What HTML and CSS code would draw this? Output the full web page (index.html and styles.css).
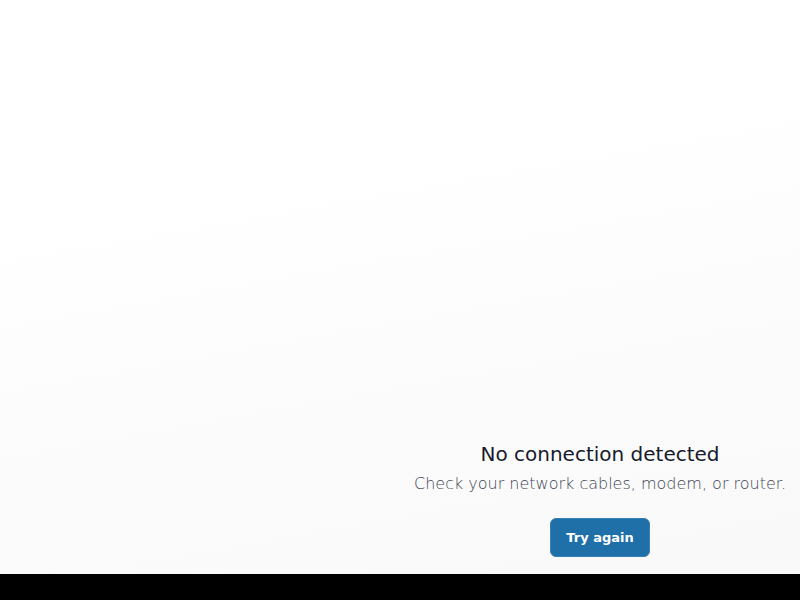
FILE: index.html
```html
<!DOCTYPE html>
<html lang="en">
<head>
    <meta charset="UTF-8">
    <meta name="viewport" content="width=device-width, initial-scale=1.0">
    <title>No connection</title>
    <link rel="stylesheet" href="styles.css">
</head>
<body>

<div class="sayfa">
    <div class="bos-alan"></div>
    <div class="hata-kutusu">
        <h1 class="baslik">No connection detected</h1>
        <p class="aciklama">Check your network cables, modem, or router.</p>
        <button class="tekrar-dene" onclick="location.reload()">Try again</button>
    </div>
</div>

<div class="alt-bar"></div>

</body>
</html>
```

FILE: styles.css
```css
html, body {
    margin: 0;
    height: 100%;
}

body {
    font-family: "DejaVu Sans", sans-serif;
    display: flex;
    flex-direction: column;
    background: linear-gradient(170deg, #ffffff 30%, #f8f8f8 100%);
}

.sayfa {
    flex: 1;
    display: grid;
    grid-template-columns: 1fr 1fr;
    align-items: end;
}

.hata-kutusu {
    display: flex;
    flex-direction: column;
    align-items: center;
    padding-bottom: 17px;
}

.baslik {
    margin: 0;
    font-size: 20px;
    font-weight: normal;
    color: #161b2b;
    line-height: 24px;
}

.aciklama {
    margin: 8px 0 0;
    font-size: 16px;
    font-weight: 300;
    color: #3f4654;
    line-height: 20px;
}

.tekrar-dene {
    margin-top: 24px;
    width: 100px;
    height: 39px;
    border: 1px solid #3a7fb3;
    border-radius: 6px;
    background-color: #1f6fa8;
    color: white;
    font-family: "DejaVu Sans", sans-serif;
    font-size: 13px;
    font-weight: bold;
    cursor: pointer;
}

.alt-bar {
    height: 26px;
    background: #000;
}
```
